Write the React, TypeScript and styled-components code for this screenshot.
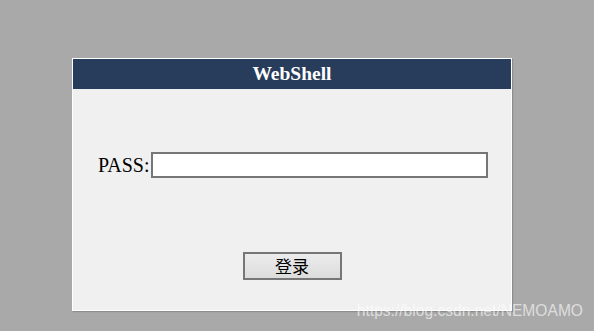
import React from 'react';
import styled, { createGlobalStyle } from 'styled-components';

const GlobalStyle = createGlobalStyle`
  html, body {
    margin: 0;
    padding: 0;
    background: #a9a9a9;
  }
  body {
    width: 594px;
    height: 331px;
    overflow: hidden;
    position: relative;
    font-family: 'Liberation Serif', 'Times New Roman', serif;
  }
`;

const Page = styled.div`
  display: flex;
  padding: 58px 0 0 72px;
`;

const Panel = styled.div`
  width: 438px;
  border: 1px solid #ffffff;
  background: #f0f0f0;
  box-shadow: 1px 1px 1px #8c8c8c;
  display: flex;
  flex-direction: column;
`;

const Header = styled.div`
  height: 30px;
  background: #283c5c;
  color: #ffffff;
  font-family: 'Liberation Serif', 'Times New Roman', serif;
  font-weight: bold;
  font-size: 19.5px;
  line-height: 30px;
  text-align: center;
`;

const Body = styled.div`
  display: flex;
  flex-direction: column;
  padding: 63px 0 30px 25px;
`;

const Row = styled.div`
  display: flex;
  align-items: center;
  height: 26px;
`;

const Label = styled.label`
  font-family: 'Liberation Serif', 'Times New Roman', serif;
  font-size: 20px;
  color: #000000;
  margin-right: 1px;
`;

const Input = styled.input`
  box-sizing: border-box;
  width: 337px;
  height: 26px;
  border: 2px solid #767676;
  background: #ffffff;
  padding: 0 4px;
  outline: none;
`;

const Actions = styled.div`
  display: flex;
  justify-content: center;
  margin: 74px 0 0 -25px;
`;

const Button = styled.button`
  box-sizing: border-box;
  width: 99px;
  height: 28px;
  border: 2px solid #767676;
  background: linear-gradient(#ececec, #dcdcdc);
  font-family: 'Noto Sans CJK SC', sans-serif;
  font-size: 17px;
  color: #000000;
  padding: 0;
  line-height: 22px;
`;

const Watermark = styled.div`
  position: absolute;
  right: 11px;
  bottom: 11px;
  font-family: 'Liberation Sans', Arial, sans-serif;
  font-size: 15.6px;
  color: rgba(255, 255, 255, 0.62);
`;

const App = () => (
  <>
    <GlobalStyle />
    <Page>
      <Panel>
        <Header>WebShell</Header>
        <Body>
          <Row>
            <Label>PASS:</Label>
            <Input type="password" />
          </Row>
          <Actions>
            <Button>登录</Button>
          </Actions>
        </Body>
      </Panel>
    </Page>
    <Watermark>https://blog.csdn.net/NEMOAMO</Watermark>
  </>
);

export default App;
